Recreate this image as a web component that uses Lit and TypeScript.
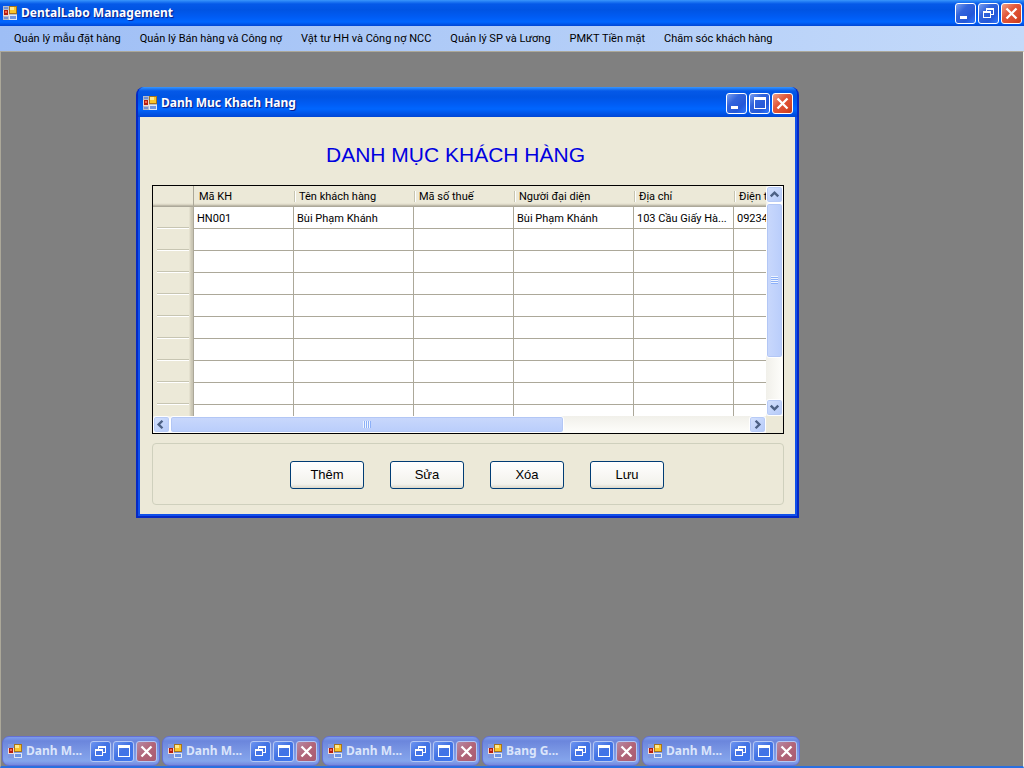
import { LitElement, html, svg, css, nothing } from "lit";
import { customElement, property } from "lit/decorators.js";

const appIcon = html`<svg class="icon" width="14" height="14" viewBox="0 0 14 14" shape-rendering="crispEdges" aria-hidden="true">
  <rect class="frame" x="0" y="0" width="14" height="14" fill="#b4bccb" />
  <rect class="cell" x="1" y="1" width="4" height="2" fill="#6f8fd6" />
  <rect class="cell" x="1" y="11" width="4" height="2" fill="#6f8fd6" />
  <rect x="0" y="4" width="6" height="6" fill="#f0d9d2" />
  <rect x="1" y="4" width="4" height="5" fill="#b51c10" />
  <rect x="2" y="5" width="2" height="2" fill="#ef6a4e" />
  <rect x="6" y="0" width="8" height="8" fill="#a8741a" />
  <rect x="7" y="1" width="6" height="6" fill="#fbc62c" />
  <rect x="7" y="1" width="4" height="3" fill="#ffe98d" />
  <rect x="6" y="9" width="8" height="5" fill="#dfe6f5" />
  <rect x="7" y="10" width="6" height="3" fill="#6c94e4" />
</svg>`;

const glyphs: Record<string, unknown> = {
  minimize: svg`<rect x="5" y="13" width="7" height="3" fill="#fff" />`,
  maximize: svg`<path d="M5 4h12v12H5z M6 7v8h10V7z" fill="#fff" fill-rule="evenodd" />`,
  restore: svg`<path d="M8 5h8v7h-3v-1h2V7H9v1H8z" fill="#fff" /><path d="M5 8h8v7H5z M6 10v4h6v-4z" fill="#fff" fill-rule="evenodd" />`,
  close: svg`<path d="M5.5 5.5l10 10M15.5 5.5l-10 10" stroke="#fff" stroke-width="2.3" fill="none" shape-rendering="auto" />`,
};

const captionLabels: Record<string, string> = {
  minimize: "Minimize",
  maximize: "Maximize",
  restore: "Restore",
  close: "Close",
};

@customElement("caption-buttons")
export class CaptionButtons extends LitElement {
  @property({ type: Array }) kinds: string[] = [];
  @property({ type: Boolean }) inactive = false;

  static styles = css`
    :host { display: flex; gap: 2px; flex: none; }
    .btn {
      width: 21px;
      height: 21px;
      padding: 0;
      box-sizing: border-box;
      border: 1px solid #fff;
      border-radius: 3px;
      background: linear-gradient(135deg, #7a9ff0 0%, #3264dc 35%, #2458d8 70%, #2f78ff 100%);
      display: grid;
      place-items: center;
    }
    .close { background: linear-gradient(135deg, #f0a188 0%, #e2583a 40%, #d8482a 75%, #c43a18 100%); }
    .dim { border-color: #b5c8f4; background: linear-gradient(135deg, #6f95f0 0%, #4273e4 45%, #3b76f0 100%); }
    .dim.close { background: linear-gradient(135deg, #b58aa5 0%, #b26478 50%, #a85c72 100%); }
    svg { display: block; }
  `;

  render() {
    return this.kinds.map(
      (k) => html`<button class="btn ${k} ${this.inactive ? "dim" : ""}" type="button" aria-label=${captionLabels[k]}>
        <svg width="19" height="19" viewBox="1 1 19 19" shape-rendering="crispEdges">${glyphs[k]}</svg>
      </button>`
    );
  }
}

const chevrons: Record<string, string> = {
  up: "M4 10l4-4 4 4",
  down: "M4 6l4 4 4-4",
  left: "M9 4L5 8l4 4",
  right: "M6 4l4 4-4 4",
};

@customElement("scroll-bar")
export class ScrollBar extends LitElement {
  @property({ reflect: true }) direction = "vertical";
  @property({ type: Number }) size = 50;

  static styles = css`
    :host { display: flex; flex-direction: column; background: linear-gradient(90deg, #f1f0ea, #fefefb); }
    :host([direction="horizontal"]) { flex-direction: row; background: linear-gradient(180deg, #f1f0ea, #fefefb); }
    .arrow {
      flex: none;
      width: 17px;
      height: 17px;
      padding: 0;
      box-sizing: border-box;
      border: 1px solid #fff;
      border-radius: 3px;
      background: linear-gradient(135deg, #d5e2fe, #b4c9f8);
      box-shadow: inset 0 0 0 1px #b8cbf6;
      display: grid;
      place-items: center;
    }
    .track { flex: 1; min-height: 0; min-width: 0; display: flex; flex-direction: inherit; }
    .thumb {
      box-sizing: border-box;
      border: 1px solid #fff;
      border-radius: 3px;
      background: linear-gradient(90deg, #c9d8fc, #b9cdfb);
      box-shadow: inset 0 0 0 1px #b3c7f5;
      display: grid;
      place-items: center;
    }
    :host([direction="horizontal"]) .thumb { background: linear-gradient(180deg, #c9d8fc, #b9cdfb); }
    .grip { width: 7px; height: 8px; background: repeating-linear-gradient(180deg, #eef4fe 0 1px, #8cb0f8 1px 2px); }
    :host([direction="horizontal"]) .grip {
      width: 8px;
      height: 7px;
      background: repeating-linear-gradient(90deg, #eef4fe 0 1px, #8cb0f8 1px 2px);
    }
    svg { display: block; }
  `;

  private arrow(dir: string) {
    return html`<button class="arrow" type="button" tabindex="-1" aria-label="Scroll ${dir}">
      <svg width="15" height="15" viewBox="0 0 16 16"><path d=${chevrons[dir]} fill="none" stroke="#4d6185" stroke-width="2.6" /></svg>
    </button>`;
  }

  render() {
    const vertical = this.direction === "vertical";
    return html`${this.arrow(vertical ? "up" : "left")}
      <div class="track"><div class="thumb" style="${vertical ? "height" : "width"}:${this.size}%"><span class="grip"></span></div></div>
      ${this.arrow(vertical ? "down" : "right")}`;
  }
}

const columns = [
  { label: "Mã KH", width: 100 },
  { label: "Tên khách hàng", width: 120 },
  { label: "Mã số thuế", width: 100 },
  { label: "Người đại diện", width: 120 },
  { label: "Địa chỉ", width: 100 },
  { label: "Điện thoại", width: 100 },
];

const records: string[][] = [["HN001", "Bùi Phạm Khánh", "", "Bùi Phạm Khánh", "103 Cầu Giấy Hà...", "0923456789"]];
while (records.length < 10) records.push(columns.map(() => ""));

@customElement("customer-grid")
export class CustomerGrid extends LitElement {
  static styles = css`
    :host {
      display: grid;
      grid-template-columns: minmax(0, 1fr) 17px;
      grid-template-rows: 230px 17px;
      border: 1px solid #000;
      background: #ece9d8;
      font: 11px/14px Roboto, Arial, sans-serif;
      color: #000;
    }
    .view { overflow: hidden; background: #fff; }
    table { border-collapse: separate; border-spacing: 0; table-layout: fixed; width: 641px; }
    .stub { width: 41px; }
    th, td { box-sizing: border-box; padding: 0; text-align: left; font-weight: normal; white-space: nowrap; overflow: hidden; text-overflow: ellipsis; }
    thead th {
      height: 21px;
      padding-left: 5px;
      background: linear-gradient(180deg, #ece9d8 0 17px, #e2decd 18px, #d2cdbb 19px, #aca899 20px);
    }
    thead .split {
      background:
        linear-gradient(#c7c5b2, #c7c5b2) 0 5px / 1px 11px no-repeat,
        linear-gradient(#fff, #fff) 1px 5px / 1px 11px no-repeat,
        linear-gradient(180deg, #ece9d8 0 17px, #e2decd 18px, #d2cdbb 19px, #aca899 20px);
    }
    thead .corner { border-right: 1px solid #aca899; }
    tbody td { height: 22px; padding: 2px 0 0 3px; border-right: 1px solid #aca899; border-bottom: 1px solid #aca899; }
    tbody th {
      height: 22px;
      border-right: 1px solid #aca899;
      background:
        linear-gradient(#fff, #fff) 4px 21px / 32px 1px no-repeat,
        linear-gradient(#c7c5b2, #c7c5b2) 4px 20px / 32px 1px no-repeat,
        linear-gradient(90deg, #ece9d8 0 36px, #dcd8c6 37px, #c8c4b3 39px);
    }
  `;

  render() {
    return html`
      <div class="view">
        <table aria-label="Danh mục khách hàng">
          <colgroup>
            <col class="stub" />
            ${columns.map((c) => html`<col style="width:${c.width}px" />`)}
          </colgroup>
          <thead>
            <tr>
              <th class="corner"></th>
              ${columns.map((c, i) => html`<th scope="col" class=${i ? "split" : nothing}>${c.label}</th>`)}
            </tr>
          </thead>
          <tbody>
            ${records.map((r) => html`<tr><th scope="row"></th>${r.map((v) => html`<td>${v}</td>`)}</tr>`)}
          </tbody>
        </table>
      </div>
      <scroll-bar direction="vertical" .size=${79}></scroll-bar>
      <scroll-bar direction="horizontal" .size=${68}></scroll-bar>
    `;
  }
}

@customElement("app-root")
export class AppRoot extends LitElement {
  static styles = css`
    :host {
      display: flex;
      flex-direction: column;
      min-height: 100vh;
      font: 11px/14px Roboto, Tahoma, sans-serif;
      color: #000;
    }
    button { font: inherit; color: inherit; }
    .caption {
      display: flex;
      align-items: center;
      box-sizing: border-box;
      height: 26px;
      padding: 0 2px 0 3px;
      gap: 4px;
      background: linear-gradient(180deg, #3c97fb 0, #2a86f8 1px, #0559e8 4px, #0054e3 10px, #005cf4 17px, #0066ff 22px, #0046d5 100%);
      color: #fff;
      font: bold 12px/16px "Noto Sans", "Trebuchet MS", sans-serif;
      text-shadow: 1px 1px 1px #0a1883;
    }
    .title { flex: 1; min-width: 0; margin: 0; font: inherit; white-space: nowrap; overflow: hidden; text-overflow: ellipsis; }
    .icon { flex: none; display: block; }
    .menu {
      display: flex;
      gap: 1px;
      box-sizing: border-box;
      height: 25px;
      padding: 0 5px;
      align-items: center;
      background: linear-gradient(90deg, #9ebef5, #c4dafa);
    }
    .menu button { border: 0; background: none; padding: 0 9px; white-space: nowrap; }
    .desktop {
      position: relative;
      flex: 1;
      overflow: hidden;
      background: #808080;
      border: 1px solid #aca899;
      border-right-color: #f4f2e8;
      border-bottom: 2px solid #2a6fe0;
    }
    .window {
      position: absolute;
      left: 135px;
      top: 35px;
      width: 663px;
      box-sizing: border-box;
      padding: 0 2px 2px;
      border: 2px solid #0629c4;
      border-top: 0;
      border-radius: 8px 8px 0 0;
      background: #1050ea;
      overflow: hidden;
    }
    .window .caption { height: 30px; margin: 0 -4px; padding: 2px 6px 0 7px; }
    .body { background: #ece9d8; padding: 25px 11px 9px 12px; }
    .heading { margin: 0; padding: 0 25px 17px 0; text-align: center; font: 21px/26px "Liberation Sans", Arial, sans-serif; color: #0000e0; }
    .actions {
      display: flex;
      justify-content: center;
      gap: 26px;
      margin-top: 9px;
      padding: 17px 0 15px 18px;
      border: 1px solid #cfd0bd;
      border-radius: 4px;
    }
    .action {
      width: 74px;
      height: 28px;
      padding: 0;
      border: 1px solid #003c74;
      border-radius: 3px;
      background: linear-gradient(180deg, #fff, #f3f2ec 85%, #dcd8cb);
      font: 13px/16px "Liberation Sans", Arial, sans-serif;
    }
    .tray { position: absolute; left: 1px; bottom: 0; display: flex; gap: 2px; }
    .mini {
      display: flex;
      align-items: center;
      gap: 4px;
      box-sizing: border-box;
      width: 158px;
      height: 30px;
      padding: 0 2px 0 5px;
      border: 1px solid #6470d4;
      border-radius: 7px;
      background: linear-gradient(180deg, #7d9cec 0, #6b86dc 4px, #7a97e4 14px, #85a5ec 24px, #7388e0 100%);
      color: #dbe5fb;
      font: bold 12px/16px "Noto Sans", "Trebuchet MS", sans-serif;
    }
    .mini .frame, .mini .cell { fill: #8099e0; }
  `;

  private menus = ["Quản lý mẫu đặt hàng", "Quản lý Bán hàng và Công nợ", "Vật tư HH và Công nợ NCC", "Quản lý SP và Lương", "PMKT Tiền mặt", "Chăm sóc khách hàng"];
  private actions = ["Thêm", "Sửa", "Xóa", "Lưu"];
  private minimized = ["Danh M...", "Danh M...", "Danh M...", "Bang G...", "Danh M..."];

  render() {
    return html`
      <header class="caption">
        ${appIcon}
        <h1 class="title">DentalLabo Management</h1>
        <caption-buttons .kinds=${["minimize", "restore", "close"]}></caption-buttons>
      </header>
      <nav class="menu">${this.menus.map((m) => html`<button type="button">${m}</button>`)}</nav>
      <main class="desktop">
        <section class="window">
          <div class="caption">
            ${appIcon}
            <h2 class="title">Danh Muc Khach Hang</h2>
            <caption-buttons .kinds=${["minimize", "maximize", "close"]}></caption-buttons>
          </div>
          <div class="body">
            <h3 class="heading">DANH MỤC KHÁCH HÀNG</h3>
            <customer-grid></customer-grid>
            <div class="actions">${this.actions.map((a) => html`<button class="action" type="button">${a}</button>`)}</div>
          </div>
        </section>
        <div class="tray">
          ${this.minimized.map(
            (t) => html`<div class="mini">
              ${appIcon}<span class="title">${t}</span>
              <caption-buttons inactive .kinds=${["restore", "maximize", "close"]}></caption-buttons>
            </div>`
          )}
        </div>
      </main>
    `;
  }
}
